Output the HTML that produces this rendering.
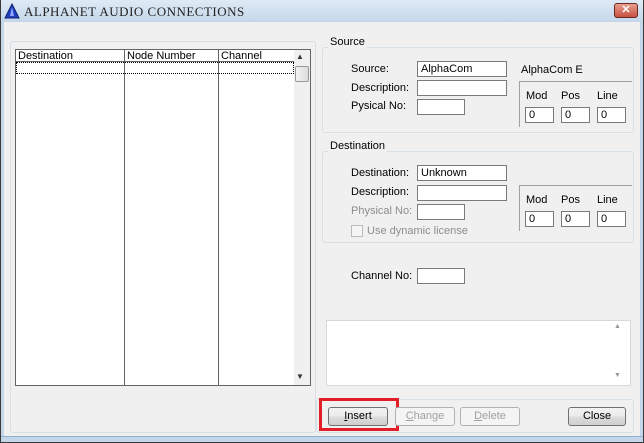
<!DOCTYPE html>
<html><head><style>
*{margin:0;padding:0;box-sizing:border-box}
body{width:644px;height:443px;background:#f0f0f0;font-family:"Liberation Sans",sans-serif;font-size:11px;color:#000;position:relative;overflow:hidden}
.a{position:absolute}
.grp{position:absolute;border:1px solid #d5dfe5;border-radius:3px}
.lbl{position:absolute;background:#f0f0f0;padding:0 2px}
.in{position:absolute;background:#fff;border:1px solid #7a7a7a;height:16px;padding-left:3px;line-height:14px}
.btn{position:absolute;height:19px;border:1px solid #707070;border-radius:3px;background:linear-gradient(#f2f2f2,#ebebeb 50%,#dddddd 51%,#cfcfcf);text-align:center;line-height:17px}
.dis{border-color:#adb2b5;color:#a0a0a0;background:#f4f4f4}
u{text-decoration:underline}
</style></head><body>
<div class="a" style="left:0;top:0;width:644px;height:443px;border:1px solid #3a3a3a;border-top:none"></div>
<div class="a" style="left:1px;top:0;width:642px;height:22px;background:linear-gradient(#dfeaf5,#c4d7ea)"></div>
<div class="a" style="left:1px;top:436px;width:642px;height:6px;background:#c4d7ea;border-top:1px solid #8fb0cf"></div>
<div class="a" style="left:1px;top:22px;width:3px;height:414px;background:#c4d7ea"></div>
<div class="a" style="left:640px;top:22px;width:3px;height:414px;background:#c4d7ea"></div>
<svg class="a" style="left:4px;top:3px" width="16" height="16"><polygon points="8,1 15,15 1,15" fill="#2040c0" stroke="#102070"/><polygon points="8,4 6,13 10,13" fill="#90a8ff"/></svg>
<div class="a" style="left:24px;top:4px;font-family:'Liberation Serif',serif;font-size:13px;letter-spacing:0.5px;color:#222">ALPHANET AUDIO CONNECTIONS</div>
<div class="a" style="left:614px;top:3px;width:24px;height:15px;border:1px solid #6d2a22;border-radius:3px;background:linear-gradient(#e8a090,#c85040);color:#fff;font-weight:bold;text-align:center;line-height:13px;font-size:11px">✕</div>

<div class="grp" style="left:10px;top:41px;width:306px;height:392px"></div>
<div class="a" style="left:15px;top:49px;width:296px;height:337px;background:#fff;border:1px solid #646464"></div>
<div class="a" style="left:16px;top:50px;width:278px;height:12px;border-bottom:1px solid #646464"></div>
<div class="a" style="left:124px;top:50px;width:1px;height:335px;background:#646464"></div>
<div class="a" style="left:218px;top:50px;width:1px;height:335px;background:#646464"></div>
<div class="a" style="left:18px;top:50px">Destination</div>
<div class="a" style="left:127px;top:50px">Node Number</div>
<div class="a" style="left:221px;top:50px">Channel</div>
<div class="a" style="left:16px;top:62px;width:278px;height:12px;border:1px dotted #000"></div>
<div class="a" style="left:294px;top:50px;width:16px;height:335px;background:#f0f0f0"></div>
<div class="a" style="left:296px;top:52px;font-size:8px;color:#333">▲</div>
<div class="a" style="left:295px;top:66px;width:14px;height:16px;border:1px solid #999;border-radius:2px;background:linear-gradient(90deg,#f4f4f4,#dcdcdc)"></div>
<div class="a" style="left:296px;top:372px;font-size:8px;color:#333">▼</div>

<div class="grp" style="left:322px;top:47px;width:312px;height:86px"></div>
<div class="lbl" style="left:328px;top:36px">Source</div>
<div class="a" style="left:351px;top:63px">Source:</div>
<div class="in" style="left:417px;top:61px;width:90px">AlphaCom</div>
<div class="a" style="left:521px;top:64px">AlphaCom E</div>
<div class="a" style="left:351px;top:82px">Description:</div>
<div class="in" style="left:417px;top:80px;width:90px"></div>
<div class="a" style="left:351px;top:100px">Pysical No:</div>
<div class="in" style="left:417px;top:99px;width:48px"></div>
<div class="a" style="left:519px;top:81px;width:113px;height:46px;border-left:1px solid #a0a0a0;border-top:1px solid #a0a0a0"></div>
<div class="a" style="left:526px;top:90px">Mod</div><div class="a" style="left:561px;top:90px">Pos</div><div class="a" style="left:597px;top:90px">Line</div>
<div class="in" style="left:525px;top:107px;width:29px">0</div>
<div class="in" style="left:561px;top:107px;width:29px">0</div>
<div class="in" style="left:597px;top:107px;width:29px">0</div>

<div class="grp" style="left:322px;top:151px;width:312px;height:92px"></div>
<div class="lbl" style="left:328px;top:140px">Destination</div>
<div class="a" style="left:351px;top:167px">Destination:</div>
<div class="in" style="left:417px;top:165px;width:90px">Unknown</div>
<div class="a" style="left:351px;top:186px">Description:</div>
<div class="in" style="left:417px;top:185px;width:90px"></div>
<div class="a" style="left:351px;top:205px;color:#8d8d8d">Physical No:</div>
<div class="in" style="left:417px;top:204px;width:48px"></div>
<div class="a" style="left:351px;top:225px;width:12px;height:12px;border:1px solid #bbb;background:#f4f4f4"></div>
<div class="a" style="left:367px;top:225px;color:#8d8d8d">Use dynamic license</div>
<div class="a" style="left:519px;top:185px;width:113px;height:46px;border-left:1px solid #a0a0a0;border-top:1px solid #a0a0a0"></div>
<div class="a" style="left:526px;top:194px">Mod</div><div class="a" style="left:561px;top:194px">Pos</div><div class="a" style="left:597px;top:194px">Line</div>
<div class="in" style="left:525px;top:211px;width:29px">0</div>
<div class="in" style="left:561px;top:211px;width:29px">0</div>
<div class="in" style="left:597px;top:211px;width:29px">0</div>

<div class="a" style="left:351px;top:270px">Channel No:</div>
<div class="in" style="left:417px;top:268px;width:48px"></div>

<div class="a" style="left:326px;top:320px;width:305px;height:66px;background:#fff;border:1px solid #d8d8d8"></div>
<div class="a" style="left:614px;top:323px;font-size:7px;color:#999">▲</div>
<div class="a" style="left:614px;top:372px;font-size:7px;color:#999">▼</div>

<div class="grp" style="left:316px;top:399px;width:318px;height:34px"></div>
<div class="a" style="left:319px;top:398px;width:80px;height:33px;border:3px solid #e41e26"></div>
<div class="btn" style="left:328px;top:407px;width:60px"><u>I</u>nsert</div>
<div class="btn dis" style="left:395px;top:407px;width:60px"><u>C</u>hange</div>
<div class="btn dis" style="left:460px;top:407px;width:60px"><u>D</u>elete</div>
<div class="btn" style="left:568px;top:407px;width:58px">Close</div>
</body></html>
